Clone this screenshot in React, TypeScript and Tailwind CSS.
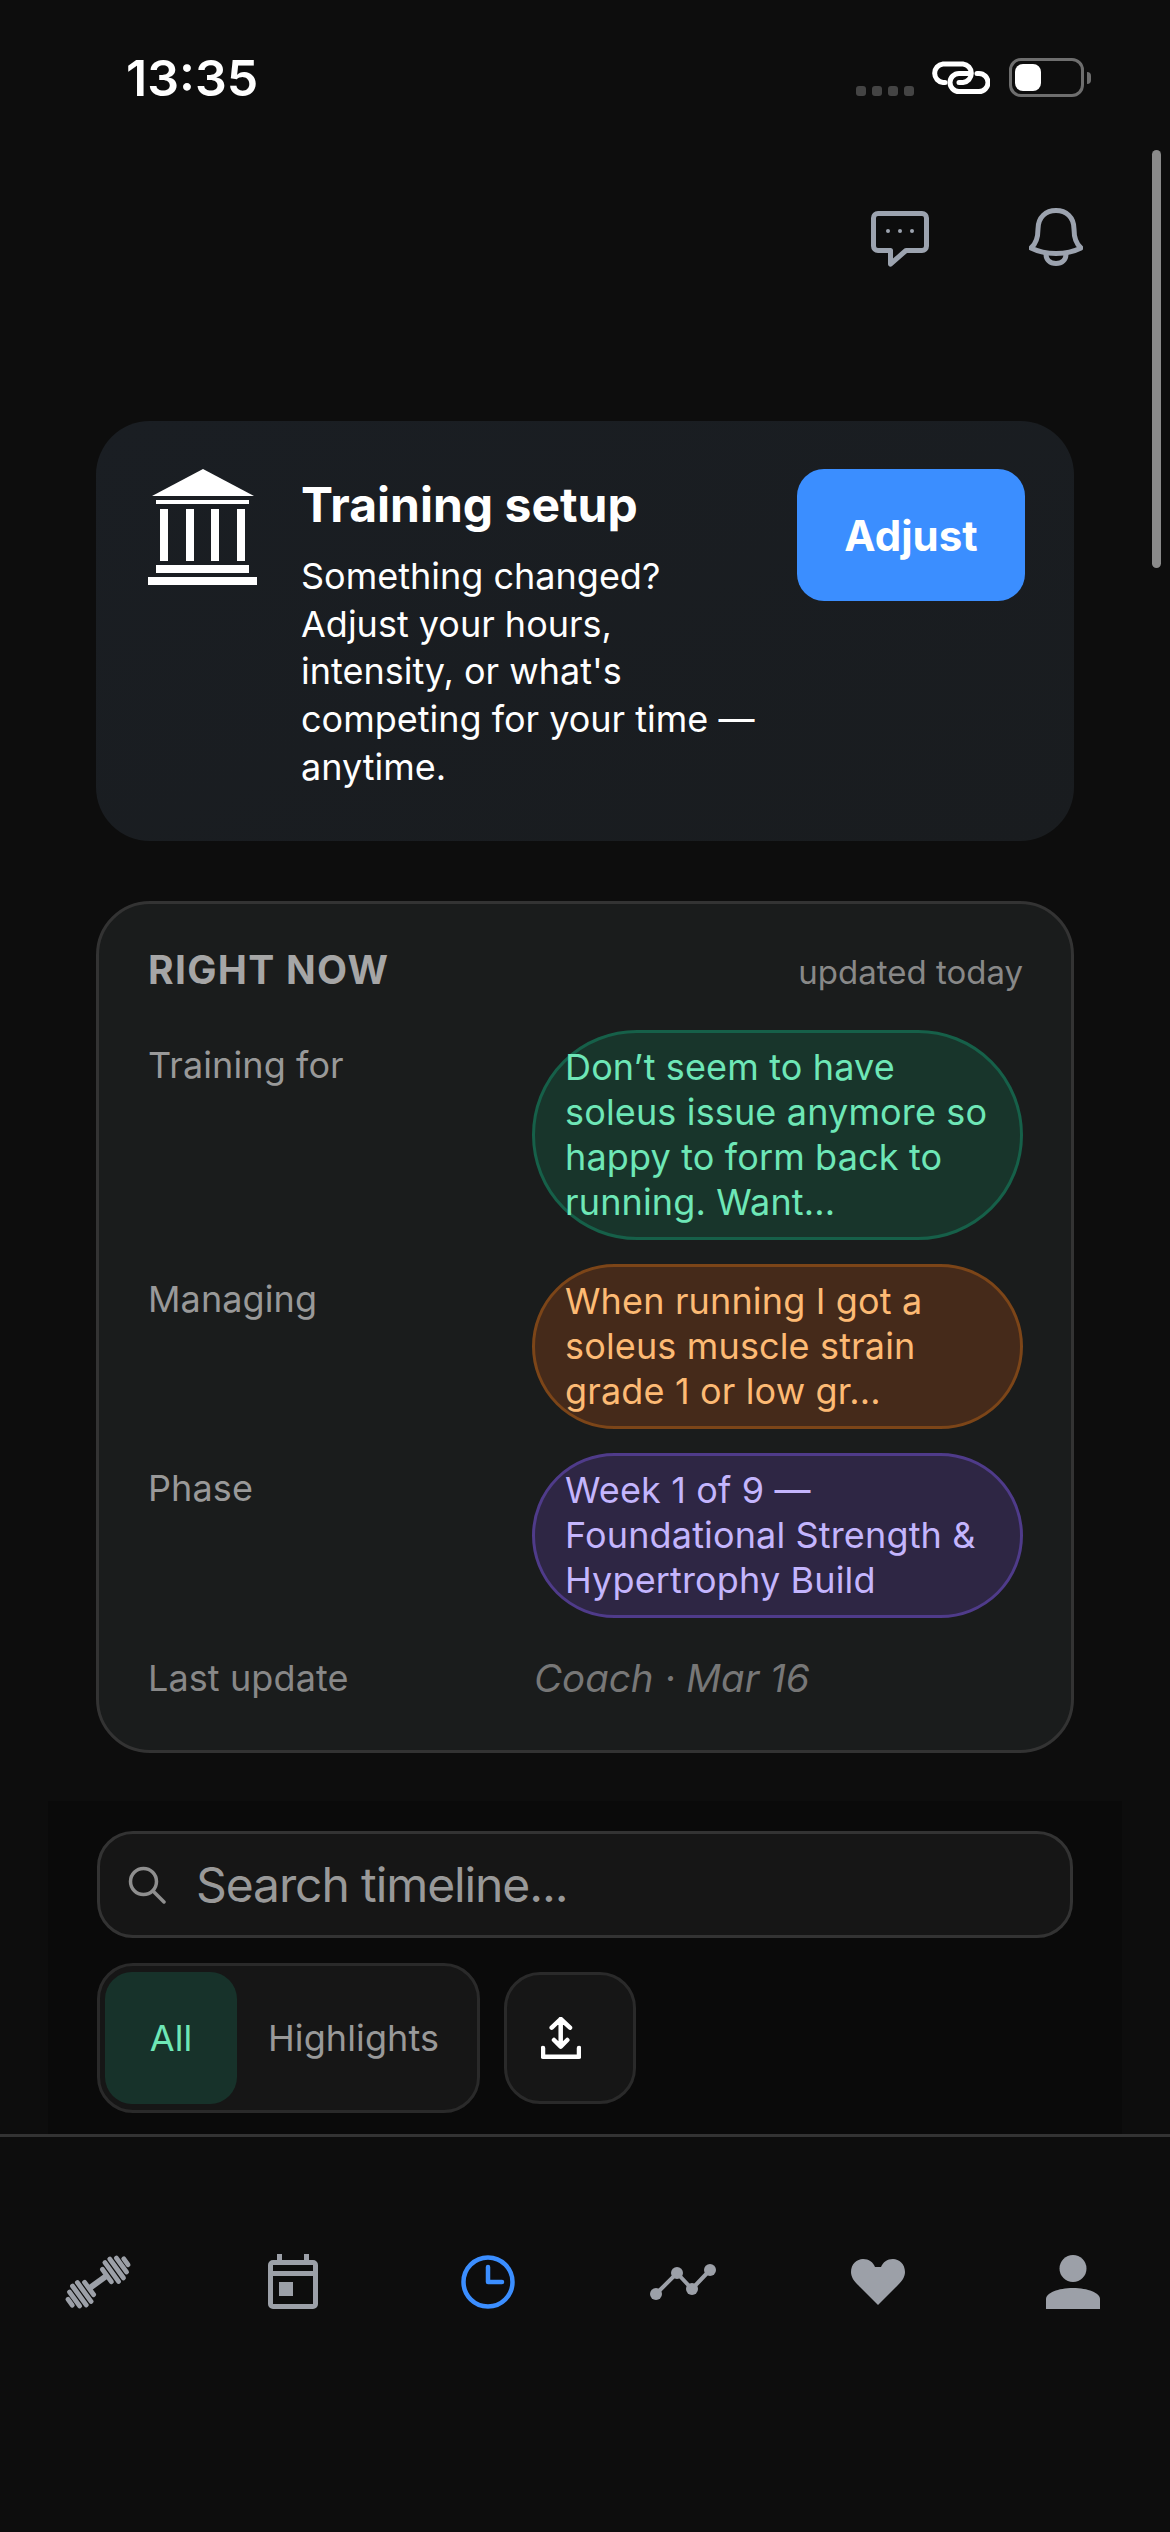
import type { ReactNode } from "react";

const font = { fontFamily: "Inter, 'Noto Sans', sans-serif" };

function BankIcon() {
    return (
        <svg width="110" height="116" viewBox="0 0 110 116" fill="#fff" className="shrink-0">
            <polygon points="55,0 106,27 4,27" />
            <rect x="8" y="31" width="93" height="4" />
            <rect x="12" y="40" width="8" height="52" />
            <rect x="38" y="40" width="8" height="52" />
            <rect x="63" y="40" width="8" height="52" />
            <rect x="89" y="40" width="8" height="52" />
            <rect x="8" y="96" width="93" height="8" />
            <rect x="0" y="108" width="109" height="8" />
        </svg>
    );
}

// each plate of the dumbbell is a rounded bar, the whole group is tilted
function DumbbellIcon() {
    const plates = [
        { x: 11, h: 10 },
        { x: 17, h: 14 },
        { x: 23, h: 14 },
        { x: 29, h: 11 },
        { x: 34.5, h: 6 },
    ];
    return (
        <svg width="66" height="54" viewBox="-33 -27 66 54" fill="#9ca0a8" className="overflow-visible">
            <g transform="rotate(-36)">
                <rect x="-10" y="-3" width="20" height="6" />
                {plates.map((p) => (
                    <g key={p.x}>
                        <rect x={p.x - 2.4} y={-p.h} width="4.8" height={p.h * 2} rx="2.2" />
                        <rect x={-p.x - 2.4} y={-p.h} width="4.8" height={p.h * 2} rx="2.2" />
                    </g>
                ))}
            </g>
        </svg>
    );
}

function CalendarIcon() {
    return (
        <svg width="50" height="56" viewBox="0 0 50 56" fill="#9ca0a8">
            <rect x="9" y="0" width="5" height="8" />
            <rect x="36" y="0" width="5" height="8" />
            <path fillRule="evenodd" d="M5 6H45A5 5 0 0 1 50 11V50A5 5 0 0 1 45 55H5A5 5 0 0 1 0 50V11A5 5 0 0 1 5 6ZM5 11V17H45V11ZM5 22V50H45V22Z" />
            <rect x="11" y="28" width="14" height="14" />
        </svg>
    );
}

function ClockIcon() {
    return (
        <svg width="54" height="54" viewBox="0 0 54 54" fill="none" stroke="#3b8eff" strokeWidth="4.5" strokeLinecap="round" strokeLinejoin="round">
            <circle cx="27" cy="27" r="24.5" />
            <path d="M27 12V27H41" />
        </svg>
    );
}

function TrendIcon() {
    return (
        <svg width="66" height="36" viewBox="0 0 66 36" fill="#9ca0a8" stroke="#9ca0a8">
            <path d="M6 30L27 9L42 25L60 6" fill="none" strokeWidth="4" />
            <circle cx="6" cy="30" r="6" stroke="none" />
            <circle cx="27" cy="9" r="6" stroke="none" />
            <circle cx="42" cy="25" r="6" stroke="none" />
            <circle cx="60" cy="6" r="6" stroke="none" />
        </svg>
    );
}

function HeartIcon() {
    return (
        <svg width="54" height="46" viewBox="0 0 54 46" fill="#9ca0a8">
            <path d="M27 46L7 26C3 22 0 18 0 13C0 5 6 0 12 0C18 0 22 3 24 8H30C32 3 36 0 42 0C48 0 54 5 54 13C54 18 51 22 47 26Z" />
        </svg>
    );
}

function PersonIcon() {
    return (
        <svg width="54" height="54" viewBox="0 0 54 54" fill="#9ca0a8">
            <ellipse cx="27" cy="13.5" rx="13.5" ry="13.5" />
            <path d="M0 54V44C0 38 12 33 27 33C42 33 54 38 54 44V54Z" />
        </svg>
    );
}

function Pill({ className, children }: { className: string; children: ReactNode }) {
    return (
        <div className={"w-[491px] rounded-full border-[3px] px-[30px] py-3 text-[36px] leading-[45px] tracking-[0.15px] " + className}>
            {children}
        </div>
    );
}

function Row({ label, children }: { label: string; children: ReactNode }) {
    return (
        <div className="flex items-start">
            <div className="w-[384px] shrink-0 pt-[11px] text-[36px] leading-[48px] tracking-[0.1px] text-[#999999]">{label}</div>
            {children}
        </div>
    );
}

export default function App() {
    return (
        <div className="relative flex h-[2532px] w-[1170px] flex-col overflow-hidden bg-[#0d0d0d] text-white" style={font}>
            {/* status bar */}
            <div className="flex h-[114px] shrink-0 items-start justify-between pl-[126px] pr-[79px] pt-[49px]">
                <div className="text-[50px] leading-[58px] font-semibold">13:35</div>
                <div className="flex items-start pt-[9px]">
                    <div className="mt-[28px] flex gap-[6px]">
                        <span className="h-[10px] w-[10px] rounded-[3px] bg-[#444444]" />
                        <span className="h-[10px] w-[10px] rounded-[3px] bg-[#444444]" />
                        <span className="h-[10px] w-[10px] rounded-[3px] bg-[#444444]" />
                        <span className="h-[10px] w-[10px] rounded-[3px] bg-[#444444]" />
                    </div>
                    <svg width="58" height="34" viewBox="0 0 58 34" fill="none" stroke="#fff" strokeWidth="5" strokeLinecap="round" className="ml-[18px] mt-[3px]">
                        <path d="M13 21.5H11A9.3 9.3 0 0 1 11 3H31A9.3 9.3 0 0 1 31 21.5H27" />
                        <path d="M45 12.5H47A9 9 0 0 1 47 30.5H27A9 9 0 0 1 27 12.5H37" />
                    </svg>
                    <div className="ml-[19px] flex h-[39px] w-[75px] items-center rounded-[12px] border-[3px] border-[#6e6e6e] pl-[3px]">
                        <div className="h-[27px] w-[26px] rounded-[8px] bg-white" />
                    </div>
                    <div className="ml-[3px] mt-[14px] h-[12px] w-[4px] rounded-r-full bg-[#6e6e6e]" />
                </div>
            </div>

            {/* header actions */}
            <div className="flex shrink-0 items-start justify-end gap-[100px] pr-[87px] pt-[94px]">
                <svg width="58" height="56" viewBox="0 0 58 56" fill="none" stroke="#9ca3af" strokeWidth="5" strokeLinejoin="round" className="mt-[3px]">
                    <path d="M7 2.5H51A4.5 4.5 0 0 1 55.5 7V35A4.5 4.5 0 0 1 51 39.5H35L19.5 53V39.5H7A4.5 4.5 0 0 1 2.5 35V7A4.5 4.5 0 0 1 7 2.5Z" />
                    <circle cx="17" cy="20" r="2" fill="#9ca3af" stroke="none" />
                    <circle cx="29" cy="20" r="2" fill="#9ca3af" stroke="none" />
                    <circle cx="41" cy="20" r="2" fill="#9ca3af" stroke="none" />
                </svg>
                <svg width="54" height="58" viewBox="0 0 54 58" fill="none" stroke="#9ca3af" strokeWidth="5" strokeLinejoin="round">
                    <path d="M2 40C8 35 9 28 9 21C9 9 17 2.5 27 2.5C37 2.5 45 9 45 21C45 28 46 35 52 40C44 44 35 45.5 27 45.5C19 45.5 10 44 2 40Z" />
                    <path d="M17 46C17 52 21 55.5 27 55.5C33 55.5 37 52 37 46" />
                </svg>
            </div>

            {/* training setup card */}
            <div className="mx-[96px] mt-[154px] flex h-[420px] shrink-0 items-start rounded-[54px] bg-gradient-to-br from-[#1a1e23] to-[#191c1f] pl-[52px] pr-[49px] pt-12">
                <BankIcon />
                <div className="ml-[43px] w-[472px] shrink-0 pt-[6px]">
                    <div className="text-[48px] leading-[60px] font-bold">Training setup</div>
                    <div className="mt-[18px] text-[36px] leading-[47.7px]">
                        Something changed? Adjust your hours, intensity, or what's competing for your time — anytime.
                    </div>
                </div>
                <div className="ml-auto flex h-[132px] w-[228px] shrink-0 items-center justify-center rounded-[27px] bg-[#3b8eff] text-[42px] font-bold">
                    Adjust
                </div>
            </div>

            {/* right now card */}
            <div className="mx-[96px] mt-[60px] h-[852px] shrink-0 rounded-[54px] border-[3px] border-[#333333] bg-[#1a1c1c] pl-[49px] pr-[48px] pt-[39px]">
                <div className="flex h-[54px] items-center justify-between">
                    <div className="text-[39px] font-bold tracking-[1.3px] text-[#a6a6a6]">RIGHT NOW</div>
                    <div className="pt-[6px] text-[33px] text-[#888888]">updated today</div>
                </div>
                <div className="mt-[33px] flex flex-col gap-6">
                    <Row label="Training for">
                        <Pill className="border-[#166049] bg-[#18352b] text-[#6ee7b7]">
                            Don’t seem to have soleus issue anymore so happy to form back to running. Want...
                        </Pill>
                    </Row>
                    <Row label="Managing">
                        <Pill className="border-[#7c4518] bg-[#452a1a] text-[#fdba74]">
                            When running I got a soleus muscle strain grade 1 or low gr...
                        </Pill>
                    </Row>
                    <Row label="Phase">
                        <Pill className="border-[#4f3b8a] bg-[#2e2644] text-[#c4b5fd]">
                            Week 1 of 9 — Foundational Strength & Hypertrophy Build
                        </Pill>
                    </Row>
                    <div className="flex items-center">
                        <div className="w-[386px] shrink-0 text-[36px] leading-[72px] tracking-[0.1px] text-[#888888]">Last update</div>
                        <div className="text-[38.5px] leading-[72px] text-[#777777] italic">Coach · Mar 16</div>
                    </div>
                </div>
            </div>

            {/* search and filters */}
            <div className="mx-[48px] mt-[48px] h-[333px] shrink-0 bg-[#0a0a0a] px-[49px] pt-[30px]">
                <div className="flex h-[107px] items-center rounded-[36px] border-[3px] border-[#333333] bg-[#161616] pl-[28px]">
                    <svg width="38" height="38" viewBox="0 0 38 38" fill="none" stroke="#8f8f8f" strokeWidth="3.5" strokeLinecap="round">
                        <circle cx="15.5" cy="15.5" r="13" />
                        <path d="M25 25L36 36" />
                    </svg>
                    <div className="ml-[30px] text-[48px] tracking-[-1.1px] text-[#999999]">Search timeline...</div>
                </div>
                <div className="mt-[25px] flex items-start">
                    <div className="flex h-[150px] w-[383px] items-center rounded-[36px] border-[3px] border-[#2a2a2a] bg-[#161616] pl-[5px]">
                        <div className="flex h-[132px] w-[132px] items-center justify-center rounded-[27px] bg-[#17322a] text-[36px] text-[#6ee7b7]">All</div>
                        <div className="ml-[31px] text-[36px] tracking-[0.1px] text-[#999999]">Highlights</div>
                    </div>
                    <div className="ml-[24px] mt-[9px] flex h-[132px] w-[132px] items-center justify-center rounded-[36px] border-[3px] border-[#2a2a2a] bg-[#161616]">
                        <svg width="40" height="42" viewBox="0 0 40 42" fill="none" stroke="#fff" strokeWidth="4.5" strokeLinecap="round" strokeLinejoin="round" className="mr-[18px]">
                            <path d="M19.7 2V29M10.7 10.7L19.7 2L29 10.7M13 23L19.7 29.7L26.3 23" />
                            <path d="M2 31V39.7H38V31" />
                        </svg>
                    </div>
                </div>
            </div>

            {/* tab bar */}
            <div className="grid h-[396px] shrink-0 grid-cols-6 justify-items-center border-t-[3px] border-[#333333] bg-[#0d0d0d] pt-[117px]">
                <div className="flex h-[56px] items-center"><DumbbellIcon /></div>
                <div className="flex h-[56px] items-center"><CalendarIcon /></div>
                <div className="flex h-[56px] items-center"><ClockIcon /></div>
                <div className="flex h-[56px] items-center"><TrendIcon /></div>
                <div className="flex h-[56px] items-center"><HeartIcon /></div>
                <div className="flex h-[56px] items-center"><PersonIcon /></div>
            </div>

            {/* overlay scrollbar */}
            <div className="absolute right-[9px] top-[150px] h-[418px] w-[9px] rounded-full bg-[#8a8a8a]" />
        </div>
    );
}
